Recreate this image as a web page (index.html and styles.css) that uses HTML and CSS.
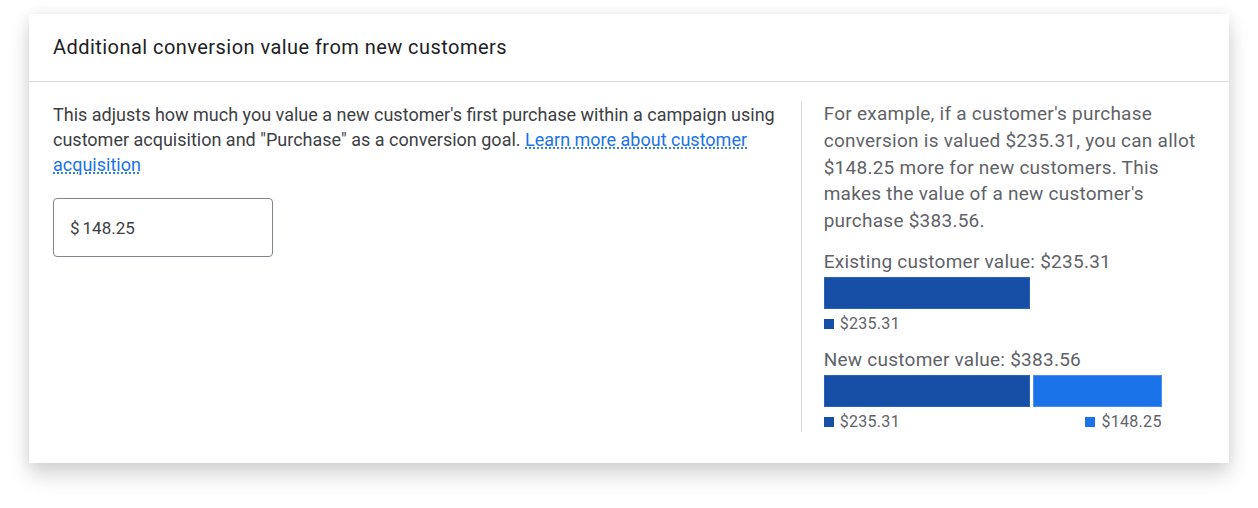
FILE: index.html
```html
<!DOCTYPE html>
<html>
<head>
<meta charset="utf-8">
<link rel="stylesheet" href="styles.css">
</head>
<body>
<div class="card">
  <div class="card-header">Additional conversion value from new customers</div>
  <div class="card-body">
    <div class="left">
      <p class="desc">This adjusts how much you value a new customer's first purchase within a campaign using customer acquisition and "Purchase" as a conversion goal. <a href="#" class="link">Learn more about customer acquisition</a></p>
      <div class="input-box"><span class="cur">$</span><span class="val">148.25</span></div>
    </div>
    <div class="right">
      <p class="example">For example, if a customer's purchase conversion is valued $235.31, you can allot $148.25 more for new customers. This makes the value of a new customer's purchase $383.56.</p>
      <div class="chart">
        <div class="chart-title">Existing customer value: $235.31</div>
        <div class="bar-row">
          <div class="bar dark" style="width:206px"></div>
        </div>
        <div class="legend-row">
          <span class="legend-item"><span class="sw dark"></span>$235.31</span>
        </div>
        <div class="chart-title second">New customer value: $383.56</div>
        <div class="bar-row">
          <div class="bar dark" style="width:206px"></div>
          <div class="bar light" style="width:129px"></div>
        </div>
        <div class="legend-row spread">
          <span class="legend-item"><span class="sw dark"></span>$235.31</span>
          <span class="legend-item"><span class="sw light"></span>$148.25</span>
        </div>
      </div>
    </div>
  </div>
</div>
</body>
</html>
```

FILE: styles.css
```css
html, body {
  margin: 0;
  padding: 0;
  background: #ffffff;
}
body {
  min-height: 508px;
  box-sizing: border-box;
  padding: 14px 29px 0 29px;
  font-family: Roboto, "Liberation Sans", Arial, sans-serif;
}
.card {
  width: 1200px;
  height: 449px;
  background: #ffffff;
  box-shadow: 0 12px 20px rgba(0, 0, 0, 0.16), 0 0 14px rgba(0, 0, 0, 0.07);
  box-sizing: border-box;
}
.card-header {
  height: 68px;
  box-sizing: border-box;
  padding: 0 24px 2px 24px;
  display: flex;
  align-items: center;
  font-size: 20px;
  letter-spacing: 0.45px;
  color: #202124;
  border-bottom: 1px solid #dadce0;
}
.card-body {
  display: flex;
  padding: 19px 24px 0 24px;
}
.left {
  width: 731px;
  padding-right: 18px;
  border-right: 1px solid #dadce0;
  height: 331px;
}
.desc {
  margin: 0;
  font-size: 18px;
  letter-spacing: 0;
  line-height: 25px;
  color: #3c4043;
  padding-top: 1px;
}
.link {
  color: #1a73e8;
  text-decoration: underline;
  text-decoration-style: dotted;
  text-underline-offset: 2px;
}
.input-box {
  margin-top: 21px;
  width: 220px;
  height: 59px;
  box-sizing: border-box;
  border: 1px solid #80868b;
  border-radius: 4px;
  display: flex;
  align-items: center;
  padding-left: 16px;
  font-size: 17px;
  color: #3c4043;
}
.cur {
  margin-right: 3px;
}
.right {
  padding-left: 22px;
  width: 382px;
}
.example {
  margin: 0;
  font-size: 19px;
  letter-spacing: 0.25px;
  line-height: 26.8px;
  color: #5f6368;
}
.chart {
  margin-top: 13px;
  width: 338px;
}
.chart-title {
  font-size: 19px;
  letter-spacing: 0.25px;
  line-height: 27px;
  color: #5f6368;
  white-space: nowrap;
}
.chart-title.second {
  margin-top: 12px;
}
.bar-row {
  display: flex;
  gap: 3px;
  margin-top: 2px;
  height: 32px;
}
.bar {
  height: 32px;
  box-sizing: border-box;
}
.bar.dark {
  background: #174ea6;
  border: 1px solid #2a62bf;
}
.bar.light {
  background: #1a73e8;
  border: 1px solid #4a8ff0;
}
.legend-row {
  display: flex;
  margin-top: 5px;
  height: 20px;
  align-items: center;
}
.legend-row.spread {
  justify-content: space-between;
}
.legend-item {
  display: flex;
  align-items: center;
  font-size: 16px;
  color: #5f6368;
  letter-spacing: 0.3px;
}
.sw {
  width: 10px;
  height: 10px;
  margin-right: 6px;
}
.sw.dark {
  background: #174ea6;
}
.sw.light {
  background: #1a73e8;
}
```
